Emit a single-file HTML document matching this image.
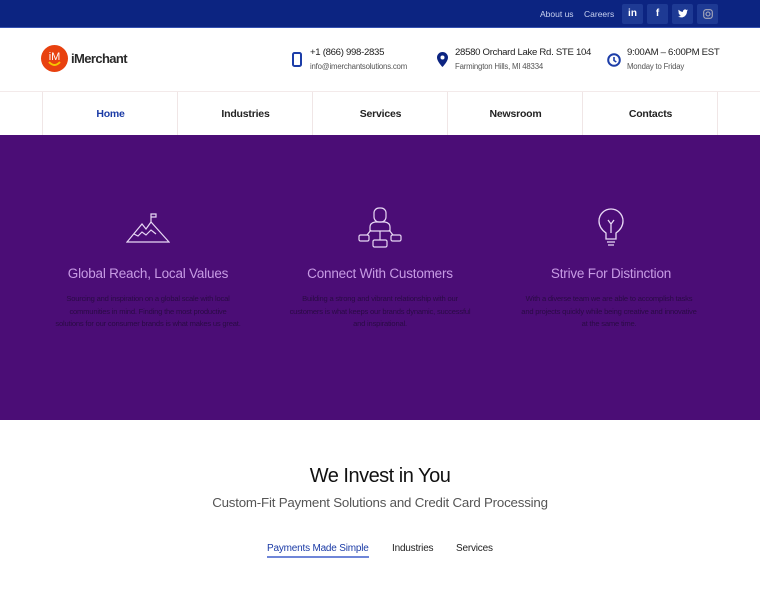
<!DOCTYPE html>
<html><head><style>
*{margin:0;padding:0;box-sizing:border-box}
body{width:760px;height:600px;overflow:hidden;font-family:"Liberation Sans",sans-serif;background:#fff;position:relative}
.top{position:absolute;left:0;top:0;width:760px;height:28px;background:#0c2481;border-bottom:1px solid #3551b0}
.top a{position:absolute;top:9px;font-size:8.5px;color:#c9d2f0}
.soc{position:absolute;top:4px;width:21px;height:20px;background:#1e3a94;border-radius:2px;color:#fff;font-size:10px;font-weight:bold;text-align:center;line-height:20px}
.hdr{position:absolute;top:28px;left:0;width:760px;height:63px}
.t1{position:absolute;font-size:9.6px;color:#222;letter-spacing:-0.3px}
.t2{position:absolute;font-size:7.8px;color:#555;letter-spacing:-0.2px}
.nav{position:absolute;top:91px;left:0;width:760px;height:44px;border-top:1px solid #f3eaea}
.nav div{position:absolute;top:0;height:44px;width:136px;border-left:1px solid #f0e6e6;text-align:center;line-height:44px;font-size:10.5px;font-weight:bold;color:#222;letter-spacing:-0.2px}
.purp{position:absolute;top:135px;left:0;width:760px;height:285px;background:#4b0d76}
.col{position:absolute;top:0;width:230px;text-align:center}
.col h3{position:absolute;top:131px;left:0;width:100%;font-weight:normal;font-size:13.5px;letter-spacing:-0.2px;color:#c79be4}
.col p{position:absolute;top:158px;left:22px;right:22px;font-size:7.6px;line-height:12.5px;color:#2a0b45;letter-spacing:-0.2px}
.col svg{position:absolute;left:50%;transform:translateX(-50%)}
</style></head><body>
<div class="top">
<a style="left:540px">About us</a><a style="left:584px">Careers</a>
<div class="soc" style="left:622px">in</div>
<div class="soc" style="left:647px">f</div>
<div class="soc" style="left:672px"><svg width="10" height="9" viewBox="0 0 24 20" style="margin-top:5px"><path d="M24 2.4a10 10 0 0 1-2.8.8A5 5 0 0 0 23.3.5a10 10 0 0 1-3.1 1.2A5 5 0 0 0 11.8 6 14 14 0 0 1 1.7.9a5 5 0 0 0 1.5 6.6A5 5 0 0 1 1 6.9a5 5 0 0 0 3.9 4.8 5 5 0 0 1-2.2.1 5 5 0 0 0 4.6 3.4A10 10 0 0 1 0 17.2 14 14 0 0 0 7.5 19.4c9 0 14-7.5 14-14v-.6A10 10 0 0 0 24 2.4z" fill="#fff"/></svg></div>
<div class="soc" style="left:697px"><svg width="10" height="10" viewBox="0 0 10 10" style="margin-top:5px"><rect x="0.7" y="0.7" width="8.6" height="8.6" rx="2.4" fill="none" stroke="#aab" stroke-width="1.1"/><circle cx="5" cy="5" r="2" fill="none" stroke="#aab" stroke-width="1.1"/></svg></div>
</div>
<div class="hdr">
<svg style="position:absolute;left:41px;top:17px" width="27" height="27" viewBox="0 0 27 27"><circle cx="13.5" cy="13.5" r="13.5" fill="#e8410f"/><text x="13.5" y="15" text-anchor="middle" font-size="11" fill="#fff" font-family="Liberation Sans">iM</text><path d="M8 17 Q13.5 23 19 17" stroke="#f5c400" stroke-width="2" fill="none"/></svg>
<div style="position:absolute;left:71px;top:23px;font-size:13px;font-weight:bold;color:#2a2a2a;letter-spacing:-0.6px">iMerchant</div>
<svg style="position:absolute;left:292px;top:24px" width="10" height="15"><rect x="1" y="1" width="8" height="13" rx="1.5" fill="none" stroke="#1c3da8" stroke-width="2"/></svg>
<div class="t1" style="left:310px;top:19px">+1 (866) 998-2835</div>
<div class="t2" style="left:310px;top:34px">info@imerchantsolutions.com</div>
<svg style="position:absolute;left:437px;top:24px" width="11" height="15" viewBox="0 0 11 15"><path d="M5.5 0A5.5 5.5 0 0 0 0 5.5C0 9.5 5.5 15 5.5 15S11 9.5 11 5.5A5.5 5.5 0 0 0 5.5 0z" fill="#0c2481"/><circle cx="5.5" cy="5.5" r="2" fill="#fff"/></svg>
<div class="t1" style="left:455px;top:19px">28580 Orchard Lake Rd. STE 104</div>
<div class="t2" style="left:455px;top:34px">Farmington Hills, MI 48334</div>
<svg style="position:absolute;left:607px;top:25px" width="14" height="14"><circle cx="7" cy="7" r="5.8" fill="none" stroke="#1c3da8" stroke-width="2"/><path d="M7 4v3.5l2.3 1.5" stroke="#1c3da8" stroke-width="1.6" fill="none"/></svg>
<div class="t1" style="left:627px;top:19px">9:00AM – 6:00PM EST</div>
<div class="t2" style="left:627px;top:34px">Monday to Friday</div>
</div>
<div class="nav">
<div style="left:42px;color:#1b3ba6">Home</div>
<div style="left:177px">Industries</div>
<div style="left:312px">Services</div>
<div style="left:447px">Newsroom</div>
<div style="left:582px">Contacts</div>
<div style="left:717px;width:43px"></div>
</div>
<div class="purp">
<div class="col" style="left:33px">
<svg style="top:78px" width="44" height="30" viewBox="0 0 44 30" fill="none" stroke="#e8d8f5" stroke-width="1.2"><path d="M1 29L16 11L20 16L25 9L43 29Z M8 21l4 2 4-4 4 3 5-5 5 4"/><path d="M25 9V1h5v3h-5"/></svg>
<h3>Global Reach, Local Values</h3>
<p>Sourcing and inspiration on a global scale with local communities in mind. Finding the most productive solutions for our consumer brands is what makes us great.</p></div>
<div class="col" style="left:265px">
<svg style="top:71px" width="44" height="44" viewBox="0 0 44 44" fill="none" stroke="#e8d8f5" stroke-width="1.2"><rect x="16" y="2" width="12" height="14" rx="5"/><path d="M12 25v-4q0-4 5-5h10q5 1 5 5v4z M22 25v9 M13 24l-4 5 M31 24l4 5"/><rect x="1" y="29" width="10" height="6" rx="1.5"/><rect x="33" y="29" width="10" height="6" rx="1.5"/><rect x="15" y="34" width="14" height="7" rx="1.5"/></svg>
<h3>Connect With Customers</h3>
<p>Building a strong and vibrant relationship with our customers is what keeps our brands dynamic, successful and inspirational.</p></div>
<div class="col" style="left:496px">
<svg style="top:73px" width="28" height="42" viewBox="0 0 28 42" fill="none" stroke="#e8d8f5" stroke-width="1.3"><path d="M9 31v-6Q2 20 2 13a12 12 0 0 1 24 0q0 7-7 12v6z M10 34h8 M11 37h6 M14 25v-9 M11 12l3 4 3-4"/></svg>
<h3>Strive For Distinction</h3>
<p style="left:24px;right:28px">With a diverse team we are able to accomplish tasks and projects quickly while being creative and innovative at the same time.</p></div>
</div>
<div style="position:absolute;top:465px;left:0;width:760px;text-align:center;font-size:20px;color:#111;letter-spacing:-0.5px">We Invest in You</div>
<div style="position:absolute;top:495px;left:0;width:760px;text-align:center;font-size:13.3px;color:#555;letter-spacing:-0.2px">Custom-Fit Payment Solutions and Credit Card Processing</div>
<div style="position:absolute;top:543px;left:267px;font-size:10px;color:#1b3ba6;border-bottom:2px solid #6f86d8;padding-bottom:2px;letter-spacing:-0.2px">Payments Made Simple</div>
<div style="position:absolute;top:543px;left:392px;font-size:10px;color:#222;letter-spacing:-0.2px">Industries</div>
<div style="position:absolute;top:543px;left:456px;font-size:10px;color:#222;letter-spacing:-0.2px">Services</div>
</body></html>
